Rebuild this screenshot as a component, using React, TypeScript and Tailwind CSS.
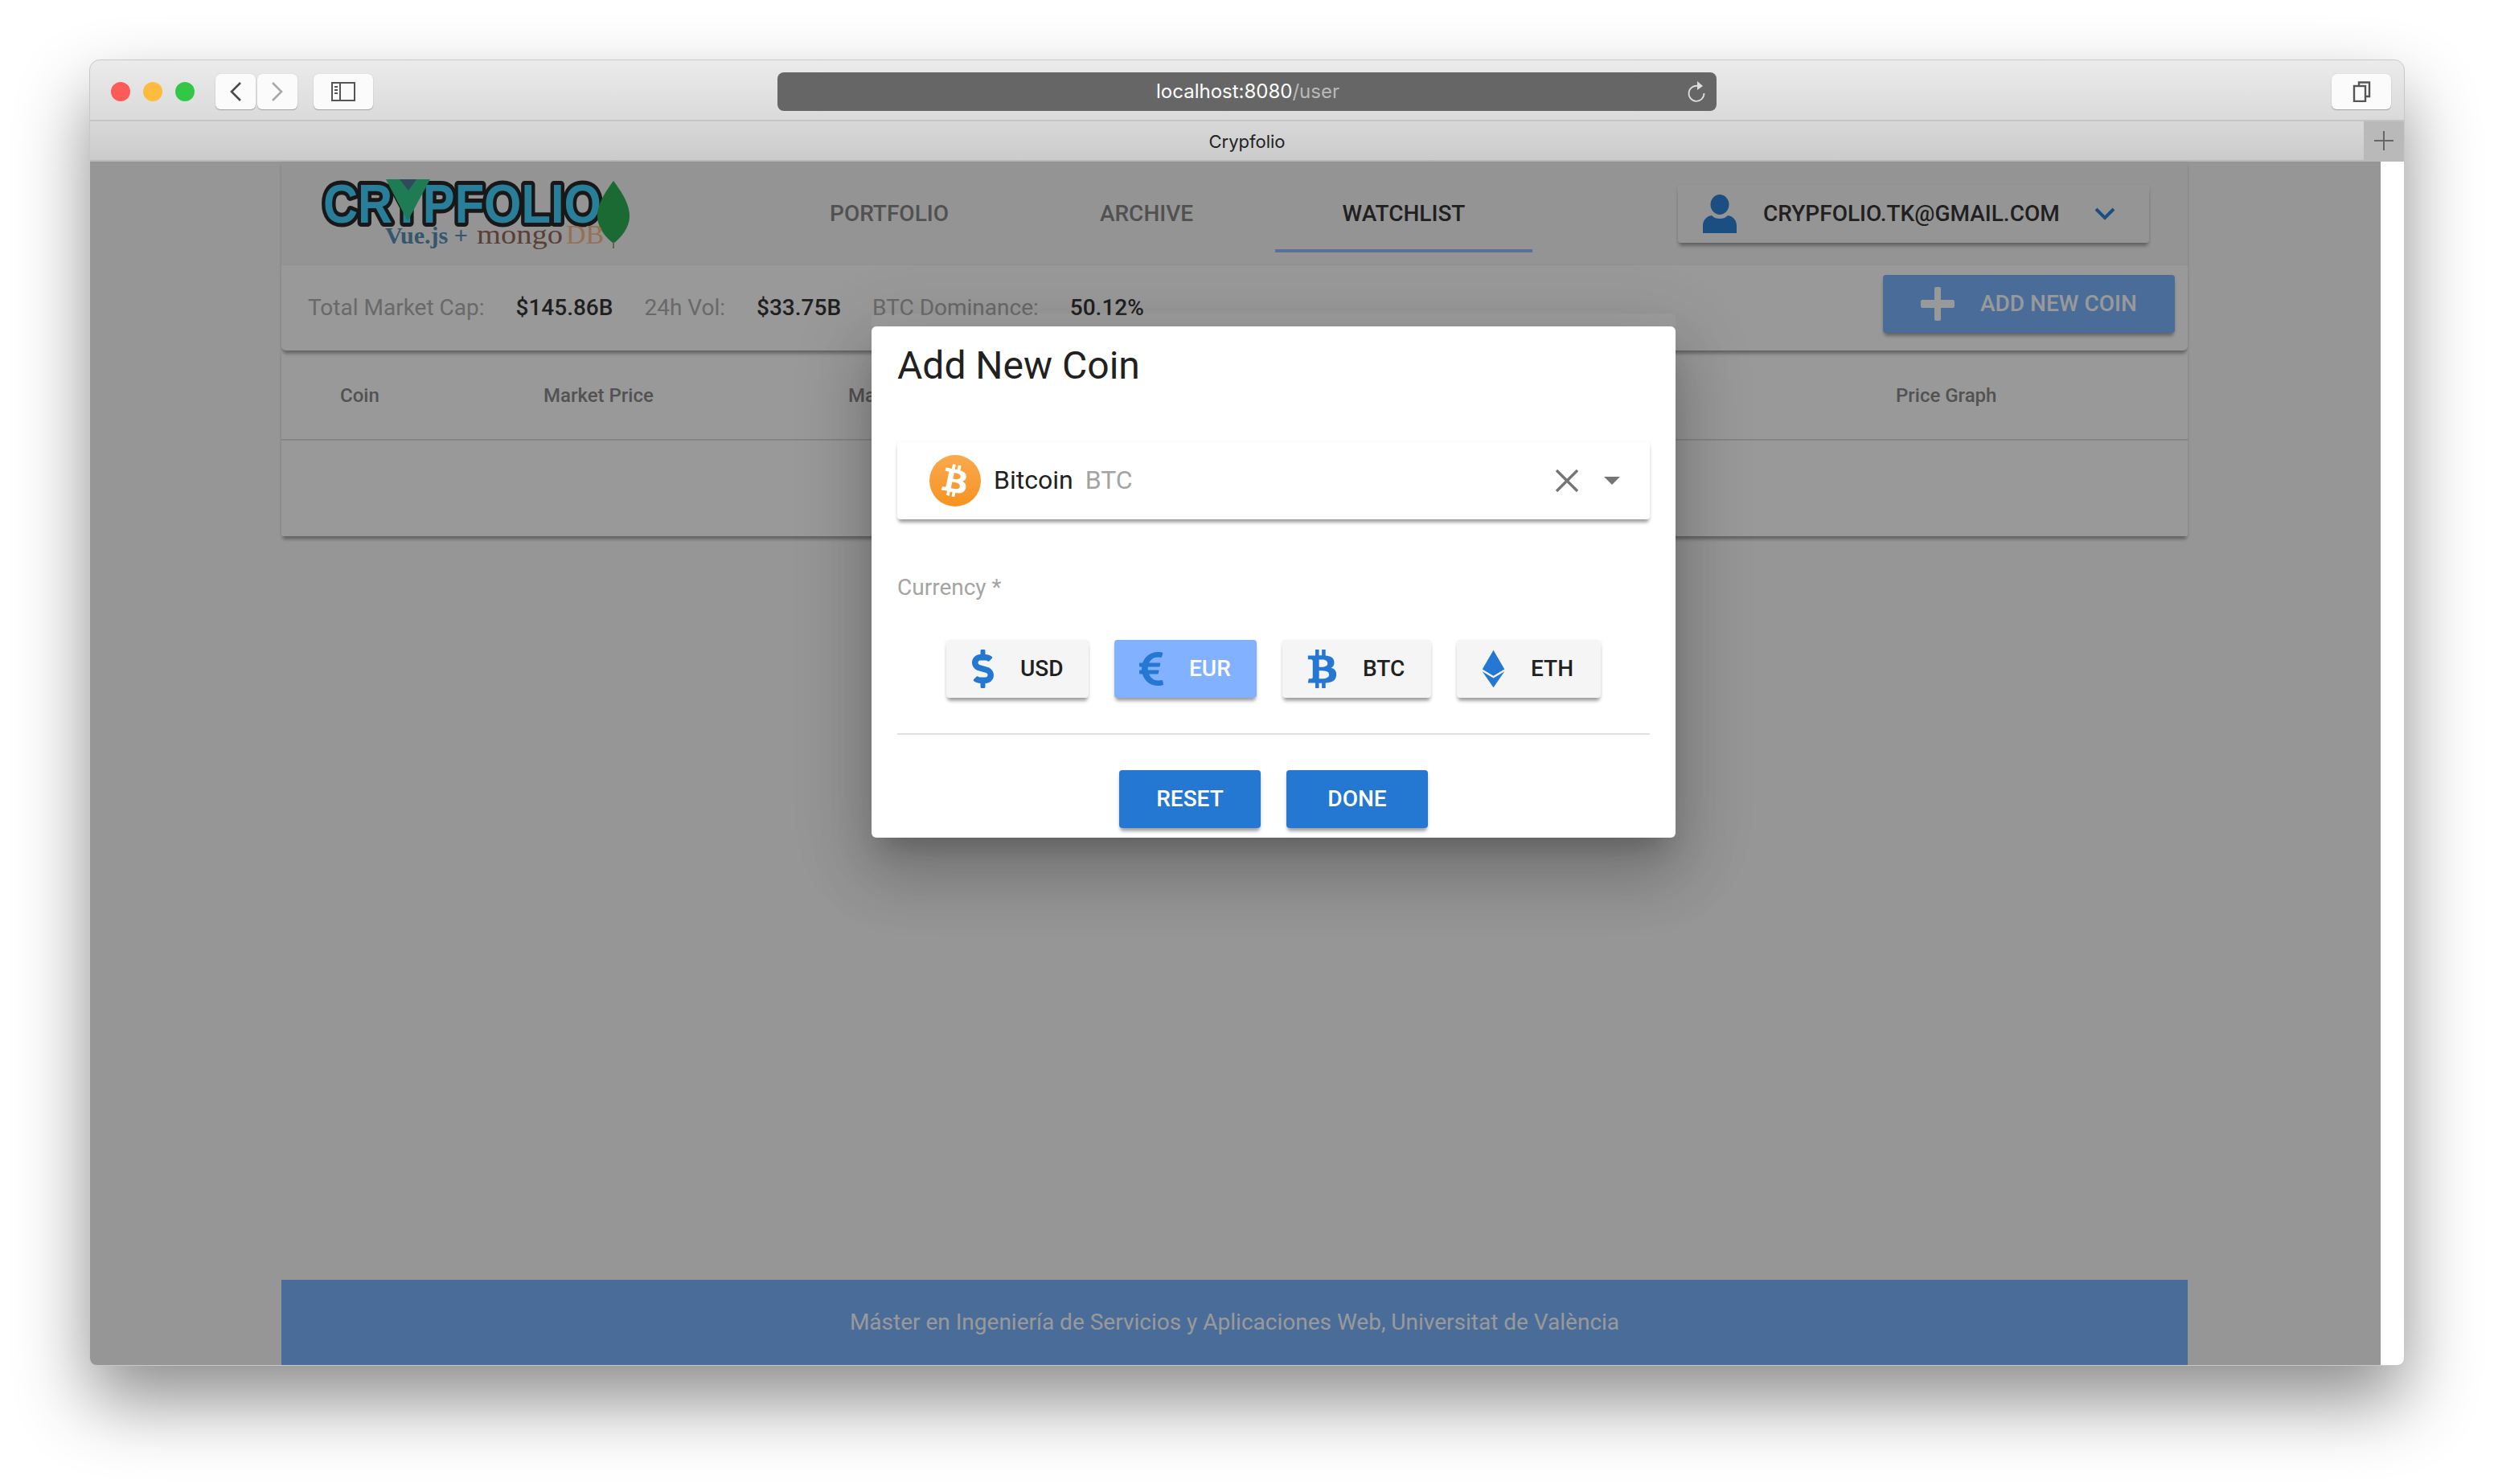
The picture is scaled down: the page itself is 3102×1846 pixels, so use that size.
import React from 'react';
import { FaBtc, FaDollarSign, FaEthereum, FaEuroSign } from 'react-icons/fa';

const currencies = [
  { code: 'USD', width: 'w-[177px]', icon: <FaDollarSign className="h-12 w-[29px] text-[#2478d2]" />, active: false },
  { code: 'EUR', width: 'w-[177px]', icon: <FaEuroSign className="h-12 w-[30px] text-[#2478d2]" />, active: true },
  { code: 'BTC', width: 'w-[185px]', icon: <FaBtc className="h-12 w-[37px] text-[#2478d2]" />, active: false },
  { code: 'ETH', width: 'w-[179px]', icon: <FaEthereum className="h-12 w-[29px] text-[#2478d2]" />, active: false },
];

const elevation = 'shadow-[0_6px_4px_-2px_rgba(0,0,0,0.3),0_2px_4px_0_rgba(0,0,0,0.14)]';

const Logo: React.FC = () => (
  <svg width="390" height="90" viewBox="0 0 390 90" className="mt-[22px] ml-[49px] shrink-0">
    <text
      x="3"
      y="54"
      fontFamily="'Liberation Sans', sans-serif"
      fontWeight="700"
      fontSize="68"
      textLength="346"
      lengthAdjust="spacingAndGlyphs"
      fill="#30d0ff"
      stroke="#111111"
      strokeWidth="10"
      paintOrder="stroke"
      strokeLinejoin="round"
    >
      CRYPFOLIO
    </text>
    <polygon points="81,0 136,0 108,52" fill="#1ec880" />
    <polygon points="98,0 119,0 109,14" fill="#3b6d90" />
    <path d="M364 2 C376 18 384 32 384 46 C384 60 374 72 364 80 C354 72 344 60 344 46 C344 32 352 18 364 2 Z" fill="#18a943" />
    <rect x="363" y="78" width="2" height="8" fill="#b09070" />
    <text
      x="80"
      y="80"
      fontFamily="'Liberation Serif', serif"
      fontWeight="700"
      fontSize="30"
      textLength="103"
      lengthAdjust="spacingAndGlyphs"
      fill="#4683b2"
    >
      Vue.js +
    </text>
    <text
      x="194"
      y="80"
      fontFamily="'Liberation Serif', serif"
      fontSize="34"
      textLength="107"
      lengthAdjust="spacingAndGlyphs"
      fill="#8b5948"
    >
      mongo
    </text>
    <text x="305" y="80" fontFamily="'Liberation Serif', serif" fontSize="34" fill="#ffb276">
      DB
    </text>
  </svg>
);

const UserIcon: React.FC = () => (
  <svg width="42" height="48" viewBox="0 0 42 48" fill="#1976d2">
    <ellipse cx="21" cy="12.5" rx="11.5" ry="12.5" />
    <path d="M0 48 V39 C0 31 5 27 11 26 C14 29 17 30 21 30 C25 30 28 29 31 26 C37 27 42 31 42 39 V48 Z" />
  </svg>
);

const ToolbarButton: React.FC<{ className: string; children: React.ReactNode }> = ({ className, children }) => (
  <div
    className={`flex h-[44px] items-center justify-center rounded-[6px] bg-[#fbfbfb] shadow-[0_1px_1px_rgba(0,0,0,0.25),0_0_1px_rgba(0,0,0,0.2)] ${className}`}
  >
    {children}
  </div>
);

const BrowserToolbar: React.FC = () => (
  <div className="flex h-[76px] shrink-0 items-center border-b-2 border-[#c4c4c4] bg-gradient-to-b from-[#ebebeb] to-[#dadada] pl-[26px] pr-[16px] pt-[4px]">
    <div className="flex gap-4">
      <span className="h-6 w-6 rounded-full bg-[#fc5b57]" />
      <span className="h-6 w-6 rounded-full bg-[#fdbc40]" />
      <span className="h-6 w-6 rounded-full bg-[#33c748]" />
    </div>
    <ToolbarButton className="ml-[26px] w-[50px]">
      <svg width="16" height="24" viewBox="0 0 16 24" fill="none" stroke="#4a4a4a" strokeWidth="2.6">
        <path d="M14 1 L3 12 L14 23" />
      </svg>
    </ToolbarButton>
    <ToolbarButton className="ml-[2px] w-[50px]">
      <svg width="16" height="24" viewBox="0 0 16 24" fill="none" stroke="#a9a9a9" strokeWidth="2.6">
        <path d="M2 1 L13 12 L2 23" />
      </svg>
    </ToolbarButton>
    <ToolbarButton className="ml-5 w-[74px]">
      <svg width="30" height="24" viewBox="0 0 30 24" fill="none" stroke="#555555" strokeWidth="2">
        <rect x="1" y="1" width="28" height="22" />
        <path d="M11 1 V23" />
        <path d="M4 6 H8 M4 10 H8 M4 14 H8" />
      </svg>
    </ToolbarButton>
    <div className="relative ml-[503px] flex h-12 w-[1168px] items-center justify-center rounded-[8px] bg-[#666666] pl-[2px] [font-family:Inter,sans-serif] text-[24px] text-white">
      <span>
        localhost:8080<span className="text-[#b9b9b9]">/user</span>
      </span>
      <svg
        className="absolute right-[13px] top-[10px]"
        width="24"
        height="28"
        viewBox="0 0 24 28"
        fill="none"
        stroke="#dddddd"
        strokeWidth="1.8"
      >
        <path d="M14 7 A9.5 9.5 0 1 0 21.5 16" />
        <path d="M13 1 L20 7 L13 12 Z" fill="#dddddd" stroke="none" />
      </svg>
    </div>
    <ToolbarButton className="ml-auto w-[74px]">
      <svg width="26" height="26" viewBox="0 0 26 26" fill="none" stroke="#555555" strokeWidth="2.4">
        <path d="M10 5 V1.5 H23 V19 H19" />
        <rect x="4" y="6" width="14" height="19" />
      </svg>
    </ToolbarButton>
  </div>
);

const TabBar: React.FC = () => (
  <div className="flex h-[50px] shrink-0 border-b-2 border-[#b8b8b8] bg-gradient-to-b from-[#d8d8d8] to-[#cbcbcb]">
    <div className="flex flex-1 items-center justify-center pl-[50px] pt-[2px] [font-family:Inter,sans-serif] text-[22px] text-[#222222]">
      Crypfolio
    </div>
    <div className="flex w-[50px] items-center justify-center bg-[#b9b9b9]">
      <svg width="24" height="24" viewBox="0 0 24 24" stroke="#666666" strokeWidth="2">
        <path d="M12 0 V24 M0 12 H24" />
      </svg>
    </div>
  </div>
);

const PageHeader: React.FC = () => (
  <div className={`flex h-[129px] bg-[#f5f5f5] ${elevation}`}>
    <Logo />
    <div className="ml-[157px] mt-[17px] flex self-start text-[28px] font-medium">
      {['PORTFOLIO', 'ARCHIVE', 'WATCHLIST'].map(tab => (
        <div
          key={tab}
          className={`flex h-[96px] w-[320px] items-center justify-center border-b-4 pt-1 ${
            tab === 'WATCHLIST' ? 'border-[#8ab4ff] text-[#212121]' : 'border-transparent text-[#7a7a7a]'
          }`}
        >
          {tab}
        </div>
      ))}
    </div>
    <div
      className={`ml-auto mr-[48px] mt-[29px] flex h-[72px] w-[586px] items-center rounded-[4px] bg-[#f8f8f8] pl-[31px] ${elevation}`}
    >
      <UserIcon />
      <span className="ml-[33px] text-[28px] font-medium text-[#212121]">CRYPFOLIO.TK@GMAIL.COM</span>
      <svg className="ml-[43px]" width="26" height="16" viewBox="0 0 26 16" fill="none" stroke="#1976d2" strokeWidth="4">
        <path d="M2 2 L13 13 L24 2" />
      </svg>
    </div>
  </div>
);

const StatsBar: React.FC = () => (
  <div className={`relative flex h-[106px] items-center rounded-b-[6px] bg-white pl-[33px] pr-4 text-[28px] ${elevation}`}>
    <div className="flex gap-[39px]">
      <span className="text-[#a6a6a6]">Total Market Cap:</span>
      <span className="font-medium text-[#212121]">$145.86B</span>
      <span className="text-[#a6a6a6]">24h Vol:</span>
      <span className="font-medium text-[#212121]">$33.75B</span>
      <span className="text-[#a6a6a6]">BTC Dominance:</span>
      <span className="font-medium text-[#212121]">50.12%</span>
    </div>
    <div
      className={`ml-auto mb-[10px] flex h-[72px] w-[363px] items-center rounded-[4px] bg-[#6dacff] pl-[47px] font-medium text-white ${elevation}`}
    >
      <svg width="42" height="42" viewBox="0 0 42 42" fill="white">
        <rect x="17" y="0" width="8" height="42" rx="2" />
        <rect x="0" y="16" width="42" height="10" rx="2" />
      </svg>
      <span className="ml-8">ADD NEW COIN</span>
    </div>
  </div>
);

const CoinTable: React.FC = () => (
  <div className={`h-[231px] rounded-b-[2px] bg-white ${elevation}`}>
    <div className="grid h-[112px] grid-cols-[253px_379px_1303px_auto] items-center border-b-2 border-[#dcdcdc] pl-[73px] pt-[2px] text-[24px] font-medium text-[#7c7c7c]">
      <span>Coin</span>
      <span>Market Price</span>
      <span>Market Cap</span>
      <span>Price Graph</span>
    </div>
  </div>
);

const AddCoinDialog: React.FC = () => (
  <div className="absolute left-[972px] top-[205px] h-[636px] w-[1000px] rounded-[6px] bg-white px-8 shadow-[0_22px_30px_-14px_rgba(0,0,0,0.2),0_48px_76px_6px_rgba(0,0,0,0.14),0_18px_92px_16px_rgba(0,0,0,0.12)]">
    <div className="absolute inset-x-0 -top-4 h-4 rounded-t-[6px] bg-white/5" />
    <h2 className="mt-5 text-[48px] leading-[58px] text-[#212121]">Add New Coin</h2>
    <div
      className={`mt-[66px] flex h-24 items-center rounded-[4px] bg-white pl-10 pr-[37px] text-[32px] ${elevation}`}
    >
      <span className="flex h-16 w-16 items-center justify-center rounded-full bg-gradient-to-b from-[#f9a94c] to-[#f7931e]">
        <FaBtc className="h-10 w-10 rotate-12 text-white" />
      </span>
      <span className="ml-4 pb-[2px] text-[#212121]">Bitcoin</span>
      <span className="ml-[15px] pb-[2px] text-[#a4a4a4]">BTC</span>
      <svg className="ml-auto" width="28" height="28" viewBox="0 0 28 28" stroke="#757575" strokeWidth="3.4">
        <path d="M1 1 L27 27 M27 1 L1 27" />
      </svg>
      <svg className="ml-[32px]" width="20" height="10" viewBox="0 0 20 10" fill="#757575">
        <polygon points="0,0 20,0 10,10" />
      </svg>
    </div>
    <div className="mt-[67px] text-[28px] leading-[36px] text-[#a4a4a4]">Currency *</div>
    <div className="mt-[47px] flex justify-center gap-8 text-[28px] font-medium">
      {currencies.map(c => (
        <div
          key={c.code}
          className={`flex h-[72px] items-center gap-8 rounded-[4px] pl-[31px] ${c.width} ${elevation} ${
            c.active ? 'bg-[#82b1ff] text-white' : 'bg-[#f5f5f5] text-[#212121]'
          }`}
        >
          {c.icon}
          {c.code}
        </div>
      ))}
    </div>
    <div className="mt-[44px] h-[2px] bg-[#e0e0e0]" />
    <div className="mt-[44px] flex justify-center gap-8 text-[28px] font-medium text-white">
      {['RESET', 'DONE'].map(label => (
        <div key={label} className={`flex h-[72px] w-[176px] items-center justify-center rounded-[4px] bg-[#2478d2] ${elevation}`}>
          {label}
        </div>
      ))}
    </div>
  </div>
);

const App: React.FC = () => {
  return (
    <div className="h-[1846px] w-[3102px] overflow-hidden bg-white pl-[112px] pt-[75px] [font-family:Roboto,sans-serif]">
      <div className="flex h-[1623px] w-[2878px] flex-col overflow-hidden rounded-t-[12px] rounded-b-[8px] shadow-[0_44px_90px_0_rgba(0,0,0,0.45)] outline outline-1 outline-[#c8c8c8]">
        <BrowserToolbar />
        <TabBar />
        <div className="flex min-h-0 flex-1">
          <div className="relative flex flex-1 flex-col bg-[#fafafa] pl-[238px] pr-[240px]">
            <PageHeader />
            <StatsBar />
            <CoinTable />
            <div className="mt-auto flex h-[106px] items-center justify-center bg-[#6dacff] text-[28px] text-white">
              Máster en Ingeniería de Servicios y Aplicaciones Web, Universitat de València
            </div>
            <div className="absolute inset-0 bg-[rgba(33,33,33,0.46)]" />
            <AddCoinDialog />
          </div>
          <div className="w-[29px] bg-white" />
        </div>
      </div>
    </div>
  );
};

export default App;
